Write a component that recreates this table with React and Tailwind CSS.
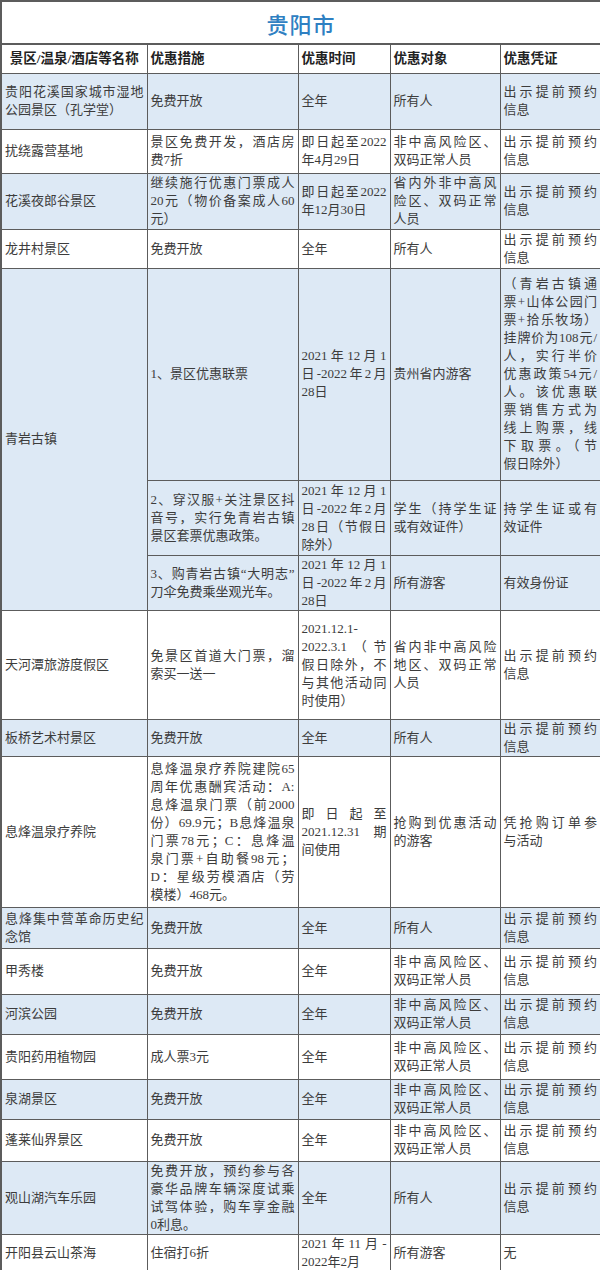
import React from "react";

const BLUE = "bg-[#dde9f5]";

// each cell = array of lines; every line but the last is justified edge to edge
function Lines({ lines }) {
  return (
    <div>
      {lines.map((l, i) => (
        <div
          key={i}
          className={`whitespace-nowrap text-justify ${
            i < lines.length - 1 ? "[text-align-last:justify]" : ""
          }`}
        >
          {l}
        </div>
      ))}
    </div>
  );
}

const SHOW = ["出示提前预约", "信息"];
const RISK = ["非中高风险区、", "双码正常人员"];

const rows = [
  {
    h: "h-[56px]",
    cells: [
      ["贵阳花溪国家城市湿地", "公园景区（孔学堂）"],
      ["免费开放"],
      ["全年"],
      ["所有人"],
      SHOW,
    ],
  },
  {
    h: "h-[44px]",
    cells: [
      ["扰绕露营基地"],
      ["景区免费开发，酒店房", "费7折"],
      ["即日起至2022", "年4月29日"],
      RISK,
      SHOW,
    ],
  },
  {
    h: "h-[56px]",
    cells: [
      ["花溪夜郎谷景区"],
      ["继续施行优惠门票成人", "20元（物价备案成人60", "元）"],
      ["即日起至2022", "年12月30日"],
      ["省内外非中高风", "险区、双码正常", "人员"],
      SHOW,
    ],
  },
  {
    h: "h-[39px]",
    cells: [["龙井村景区"], ["免费开放"], ["全年"], ["所有人"], SHOW],
  },
  {
    h: "h-[212px]",
    span: ["青岩古镇"],
    cells: [
      ["1、景区优惠联票"],
      ["2021年12月1", "日-2022年2月", "28日"],
      ["贵州省内游客"],
      [
        "（青岩古镇通",
        "票+山体公园门",
        "票+拾乐牧场）",
        "挂牌价为108元/",
        "人，实行半价",
        "优惠政策54元/",
        "人。该优惠联",
        "票销售方式为",
        "线上购票，线",
        "下取票。（节",
        "假日除外）",
      ],
    ],
  },
  {
    h: "h-[75px]",
    cells: [
      ["2、穿汉服+关注景区抖", "音号，实行免青岩古镇", "景区套票优惠政策。"],
      ["2021年12月1", "日-2022年2月", "28日（节假日", "除外）"],
      ["学生（持学生证", "或有效证件）"],
      ["持学生证或有", "效证件"],
    ],
  },
  {
    h: "h-[54px]",
    cells: [
      ["3、购青岩古镇“大明志”", "刀伞免费乘坐观光车。"],
      ["2021年12月1", "日-2022年2月", "28日"],
      ["所有游客"],
      ["有效身份证"],
    ],
  },
  {
    h: "h-[109px]",
    cells: [
      ["天河潭旅游度假区"],
      ["免景区首道大门票，溜", "索买一送一"],
      ["2021.12.1-", "2022.3.1（节", "假日除外，不", "与其他活动同", "时使用）"],
      ["省内非中高风险", "地区、双码正常", "人员"],
      SHOW,
    ],
  },
  {
    h: "h-[35px]",
    cells: [["板桥艺术村景区"], ["免费开放"], ["全年"], ["所有人"], SHOW],
  },
  {
    h: "h-[151px]",
    cells: [
      ["息烽温泉疗养院"],
      [
        "息烽温泉疗养院建院65",
        "周年优惠酬宾活动：A:",
        "息烽温泉门票（前2000",
        "份）69.9元；B息烽温泉",
        "门票78元；C：息烽温",
        "泉门票+自助餐98元；",
        "D：星级劳模酒店（劳",
        "模楼）468元。",
      ],
      ["即日起至", "2021.12.31 期", "间使用"],
      ["抢购到优惠活动", "的游客"],
      ["凭抢购订单参", "与活动"],
    ],
  },
  {
    h: "h-[41px]",
    cells: [
      ["息烽集中营革命历史纪", "念馆"],
      ["免费开放"],
      ["全年"],
      ["所有人"],
      SHOW,
    ],
  },
  { h: "h-[46px]", cells: [["甲秀楼"], ["免费开放"], ["全年"], RISK, SHOW] },
  { h: "h-[40px]", cells: [["河滨公园"], ["免费开放"], ["全年"], RISK, SHOW] },
  {
    h: "h-[45px]",
    cells: [["贵阳药用植物园"], ["成人票3元"], ["全年"], RISK, SHOW],
  },
  { h: "h-[40px]", cells: [["泉湖景区"], ["免费开放"], ["全年"], RISK, SHOW] },
  {
    h: "h-[42px]",
    cells: [["蓬莱仙界景区"], ["免费开放"], ["全年"], RISK, SHOW],
  },
  {
    h: "h-[73px]",
    cells: [
      ["观山湖汽车乐园"],
      [
        "免费开放，预约参与各",
        "豪华品牌车辆深度试乘",
        "试驾体验，购车享金融",
        "0利息。",
      ],
      ["全年"],
      ["所有人"],
      SHOW,
    ],
  },
  {
    h: "h-[38px]",
    cells: [
      ["开阳县云山茶海"],
      ["住宿打6折"],
      ["2021年11月-", "2022年2月"],
      ["所有游客"],
      ["无"],
    ],
  },
];

// alternate row colours; the three 青岩 sub-rows share one colour
const shade = [1, 0, 1, 0, 1, 1, 1, 0, 1, 0, 1, 0, 1, 0, 1, 0, 1, 0];

export default function App() {
  const td = "border border-[#5c5c5c] px-[3px] align-middle overflow-hidden";
  return (
    <div className="w-[600px] h-[1270px] bg-white font-['Liberation_Serif','Noto_Sans_CJK_SC',serif] text-[13px] leading-[18px] text-[#3c3c3c]">
      <table className="table-fixed w-[600px] border-collapse border-2 border-[#5c5c5c]">
        <colgroup>
          <col className="w-[146px]" />
          <col className="w-[151px]" />
          <col className="w-[92px]" />
          <col className="w-[110px]" />
          <col className="w-[101px]" />
        </colgroup>
        <tbody>
          <tr className="h-[43px]">
            <td
              colSpan={5}
              className="border-2 border-[#5c5c5c] text-center text-[22px] text-[#2f80c2] font-['Noto_Sans_CJK_SC',sans-serif] font-medium tracking-[1px]"
            >
              贵阳市
            </td>
          </tr>
          <tr className="h-[29px] font-bold text-[13.5px] text-[#222]">
            <td className={`${td} text-center`}>景区/温泉/酒店等名称</td>
            <td className={td}>优惠措施</td>
            <td className={td}>优惠时间</td>
            <td className={td}>优惠对象</td>
            <td className={td}>优惠凭证</td>
          </tr>
          {rows.map((r, i) => (
            <tr key={i} className={`${r.h} ${shade[i] ? BLUE : "bg-white"}`}>
              {r.span && (
                <td rowSpan={3} className={`${td} ${BLUE}`}>
                  <Lines lines={r.span} />
                </td>
              )}
              {r.cells.map((c, j) => (
                <td key={j} className={td}>
                  <Lines lines={c} />
                </td>
              ))}
            </tr>
          ))}
        </tbody>
      </table>
    </div>
  );
}
